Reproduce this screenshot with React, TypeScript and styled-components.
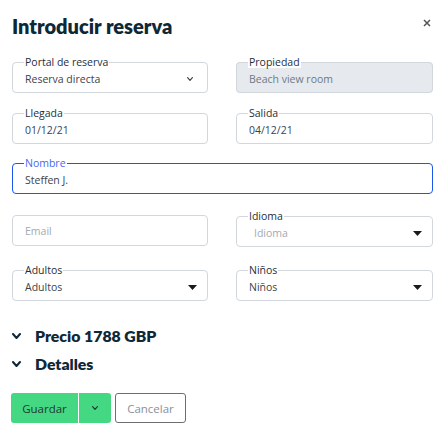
import React from "react";
import styled, { createGlobalStyle } from "styled-components";

const Global = createGlobalStyle`
  html, body { margin: 0; padding: 0; background: #fff; }
  body { font-family: "Open Sans", Lato, sans-serif; color: #0f2a3a; }
  * { box-sizing: border-box; }
`;

const Dialog = styled.div`
  width: 442px;
  height: 436px;
  padding: 0 9px 0 12px;
  display: flex;
  flex-direction: column;
`;

const Header = styled.div`
  display: flex;
  justify-content: space-between;
  align-items: flex-start;
  padding-top: 14px;
  height: 56px;
`;

const Title = styled.h1`
  margin: 0;
  font-family: Lato, sans-serif;
  font-size: 20px;
  line-height: 24px;
  font-weight: 800;
  color: #0e2838;
`;

const Close = styled.button`
  border: 0;
  background: none;
  padding: 0;
  margin: 5px 2px 0 0;
  width: 8px;
  height: 8px;
  display: flex;
`;

const Row = styled.div<{ $top: number }>`
  display: grid;
  grid-template-columns: 196px 197px;
  column-gap: 28px;
  align-items: end;
  margin-top: ${(p) => p.$top}px;
`;

const Wide = styled.div<{ $top: number }>`
  margin-top: ${(p) => p.$top}px;
`;

const Field = styled.fieldset<{ $bg?: string; $focus?: boolean }>`
  margin: 0;
  min-width: 0;
  padding: 4px 10px 6px 12px;
  border: 1px solid ${(p) => (p.$focus ? "#1d56ec" : "#d2d7dd")};
  border-radius: 4px;
  background: ${(p) => p.$bg || "#fff"};
  display: flex;
  align-items: center;
  justify-content: space-between;
`;

const Legend = styled.legend<{ $focus?: boolean }>`
  font-size: 10.5px;
  line-height: 12px;
  padding: 0 1px;
  margin-left: -1px;
  color: ${(p) => (p.$focus ? "#4a68f0" : "#1f2e3b")};
  background: #fff;
`;

const Value = styled.span<{ $tone?: "value" | "muted" | "placeholder"; $indent?: number }>`
  font-size: 10.5px;
  line-height: 14px;
  padding-left: ${(p) => p.$indent || 0}px;
  color: ${(p) =>
    p.$tone === "muted" ? "#6f7a84" : p.$tone === "placeholder" ? "#a3aab2" : "#3b434b"};
`;

const Plain = styled.div`
  height: 31px;
  margin-bottom: 1px;
  border: 1px solid #d2d7dd;
  border-radius: 4px;
  padding: 0 12px;
  display: flex;
  align-items: center;
`;

const Icon = styled.span<{ $right: number }>`
  display: flex;
  margin-right: ${(p) => p.$right}px;
`;

const Section = styled.div<{ $top: number }>`
  display: flex;
  align-items: center;
  gap: 14px;
  margin-top: ${(p) => p.$top}px;
  height: 20px;
`;

const SectionTitle = styled.span`
  font-family: Lato, sans-serif;
  font-size: 15.8px;
  line-height: 20px;
  font-weight: 800;
  color: #0e2838;
`;

const Actions = styled.div`
  display: flex;
  gap: 4px;
  margin-top: 19px;
  margin-left: -1px;
`;

const Split = styled.div`
  display: flex;
  gap: 1px;
`;

const Primary = styled.button<{ $side: "main" | "menu" }>`
  height: 30px;
  border: 0;
  background: #44d882;
  color: #1b3a37;
  font-family: inherit;
  font-size: 11.5px;
  padding: 0;
  width: ${(p) => (p.$side === "main" ? "67px" : "32px")};
  border-radius: ${(p) => (p.$side === "main" ? "3px 0 0 3px" : "0 3px 3px 0")};
  display: flex;
  align-items: center;
  justify-content: center;
`;

const Secondary = styled.button`
  height: 30px;
  width: 71px;
  border: 1px solid #6b6f74;
  border-radius: 3px;
  background: #fff;
  color: #8a9097;
  font-family: inherit;
  font-size: 11.5px;
  padding: 0;
`;

const Chevron = ({ w = 6, h = 4, sw = 1.2, color = "#444" }) => (
  <svg width={w} height={h} viewBox={`0 0 ${w} ${h}`} fill="none">
    <path
      d={`M${sw / 2} ${sw / 2} L${w / 2} ${h - sw / 2} L${w - sw / 2} ${sw / 2}`}
      stroke={color}
      strokeWidth={sw}
      strokeLinecap="round"
      strokeLinejoin="round"
    />
  </svg>
);

const Caret = () => (
  <svg width="9" height="5" viewBox="0 0 9 5">
    <path d="M0 0 H9 L4.5 5 Z" fill="#1a1a1a" />
  </svg>
);

export default function App() {
  return (
    <>
      <Global />
      <Dialog>
        <Header>
          <Title>Introducir reserva</Title>
          <Close aria-label="Cerrar">
            <svg width="8" height="8" viewBox="0 0 8 8">
              <path d="M1 1 L7 7 M7 1 L1 7" stroke="#555" strokeWidth="1.5" />
            </svg>
          </Close>
        </Header>

        <Row $top={0}>
          <Field>
            <Legend>Portal de reserva</Legend>
            <Value>Reserva directa</Value>
            <Icon $right={4}>
              <Chevron />
            </Icon>
          </Field>
          <Field $bg="#e6e9ed">
            <Legend>Propiedad</Legend>
            <Value $tone="muted">Beach view room</Value>
          </Field>
        </Row>

        <Row $top={14}>
          <Field>
            <Legend>Llegada</Legend>
            <Value>01/12/21</Value>
          </Field>
          <Field>
            <Legend>Salida</Legend>
            <Value>04/12/21</Value>
          </Field>
        </Row>

        <Wide $top={13}>
          <Field $focus>
            <Legend $focus>Nombre</Legend>
            <Value>Steffen J.</Value>
          </Field>
        </Wide>

        <Row $top={16}>
          <Plain>
            <Value $tone="placeholder">Email</Value>
          </Plain>
          <Field>
            <Legend>Idioma</Legend>
            <Value $tone="placeholder" $indent={5}>Idioma</Value>
            <Caret />
          </Field>
        </Row>

        <Row $top={17}>
          <Field>
            <Legend>Adultos</Legend>
            <Value>Adultos</Value>
            <Caret />
          </Field>
          <Field>
            <Legend>Niños</Legend>
            <Value>Niños</Value>
            <Caret />
          </Field>
        </Row>

        <Section $top={25}>
          <Chevron w={9} h={6} sw={2} color="#0e2838" />
          <SectionTitle>Precio 1788 GBP</SectionTitle>
        </Section>
        <Section $top={8}>
          <Chevron w={9} h={6} sw={2} color="#0e2838" />
          <SectionTitle>Detalles</SectionTitle>
        </Section>

        <Actions>
          <Split>
            <Primary $side="main">Guardar</Primary>
            <Primary $side="menu">
              <Chevron w={6} h={4} sw={1.2} color="#1b3a37" />
            </Primary>
          </Split>
          <Secondary>Cancelar</Secondary>
        </Actions>
      </Dialog>
    </>
  );
}
